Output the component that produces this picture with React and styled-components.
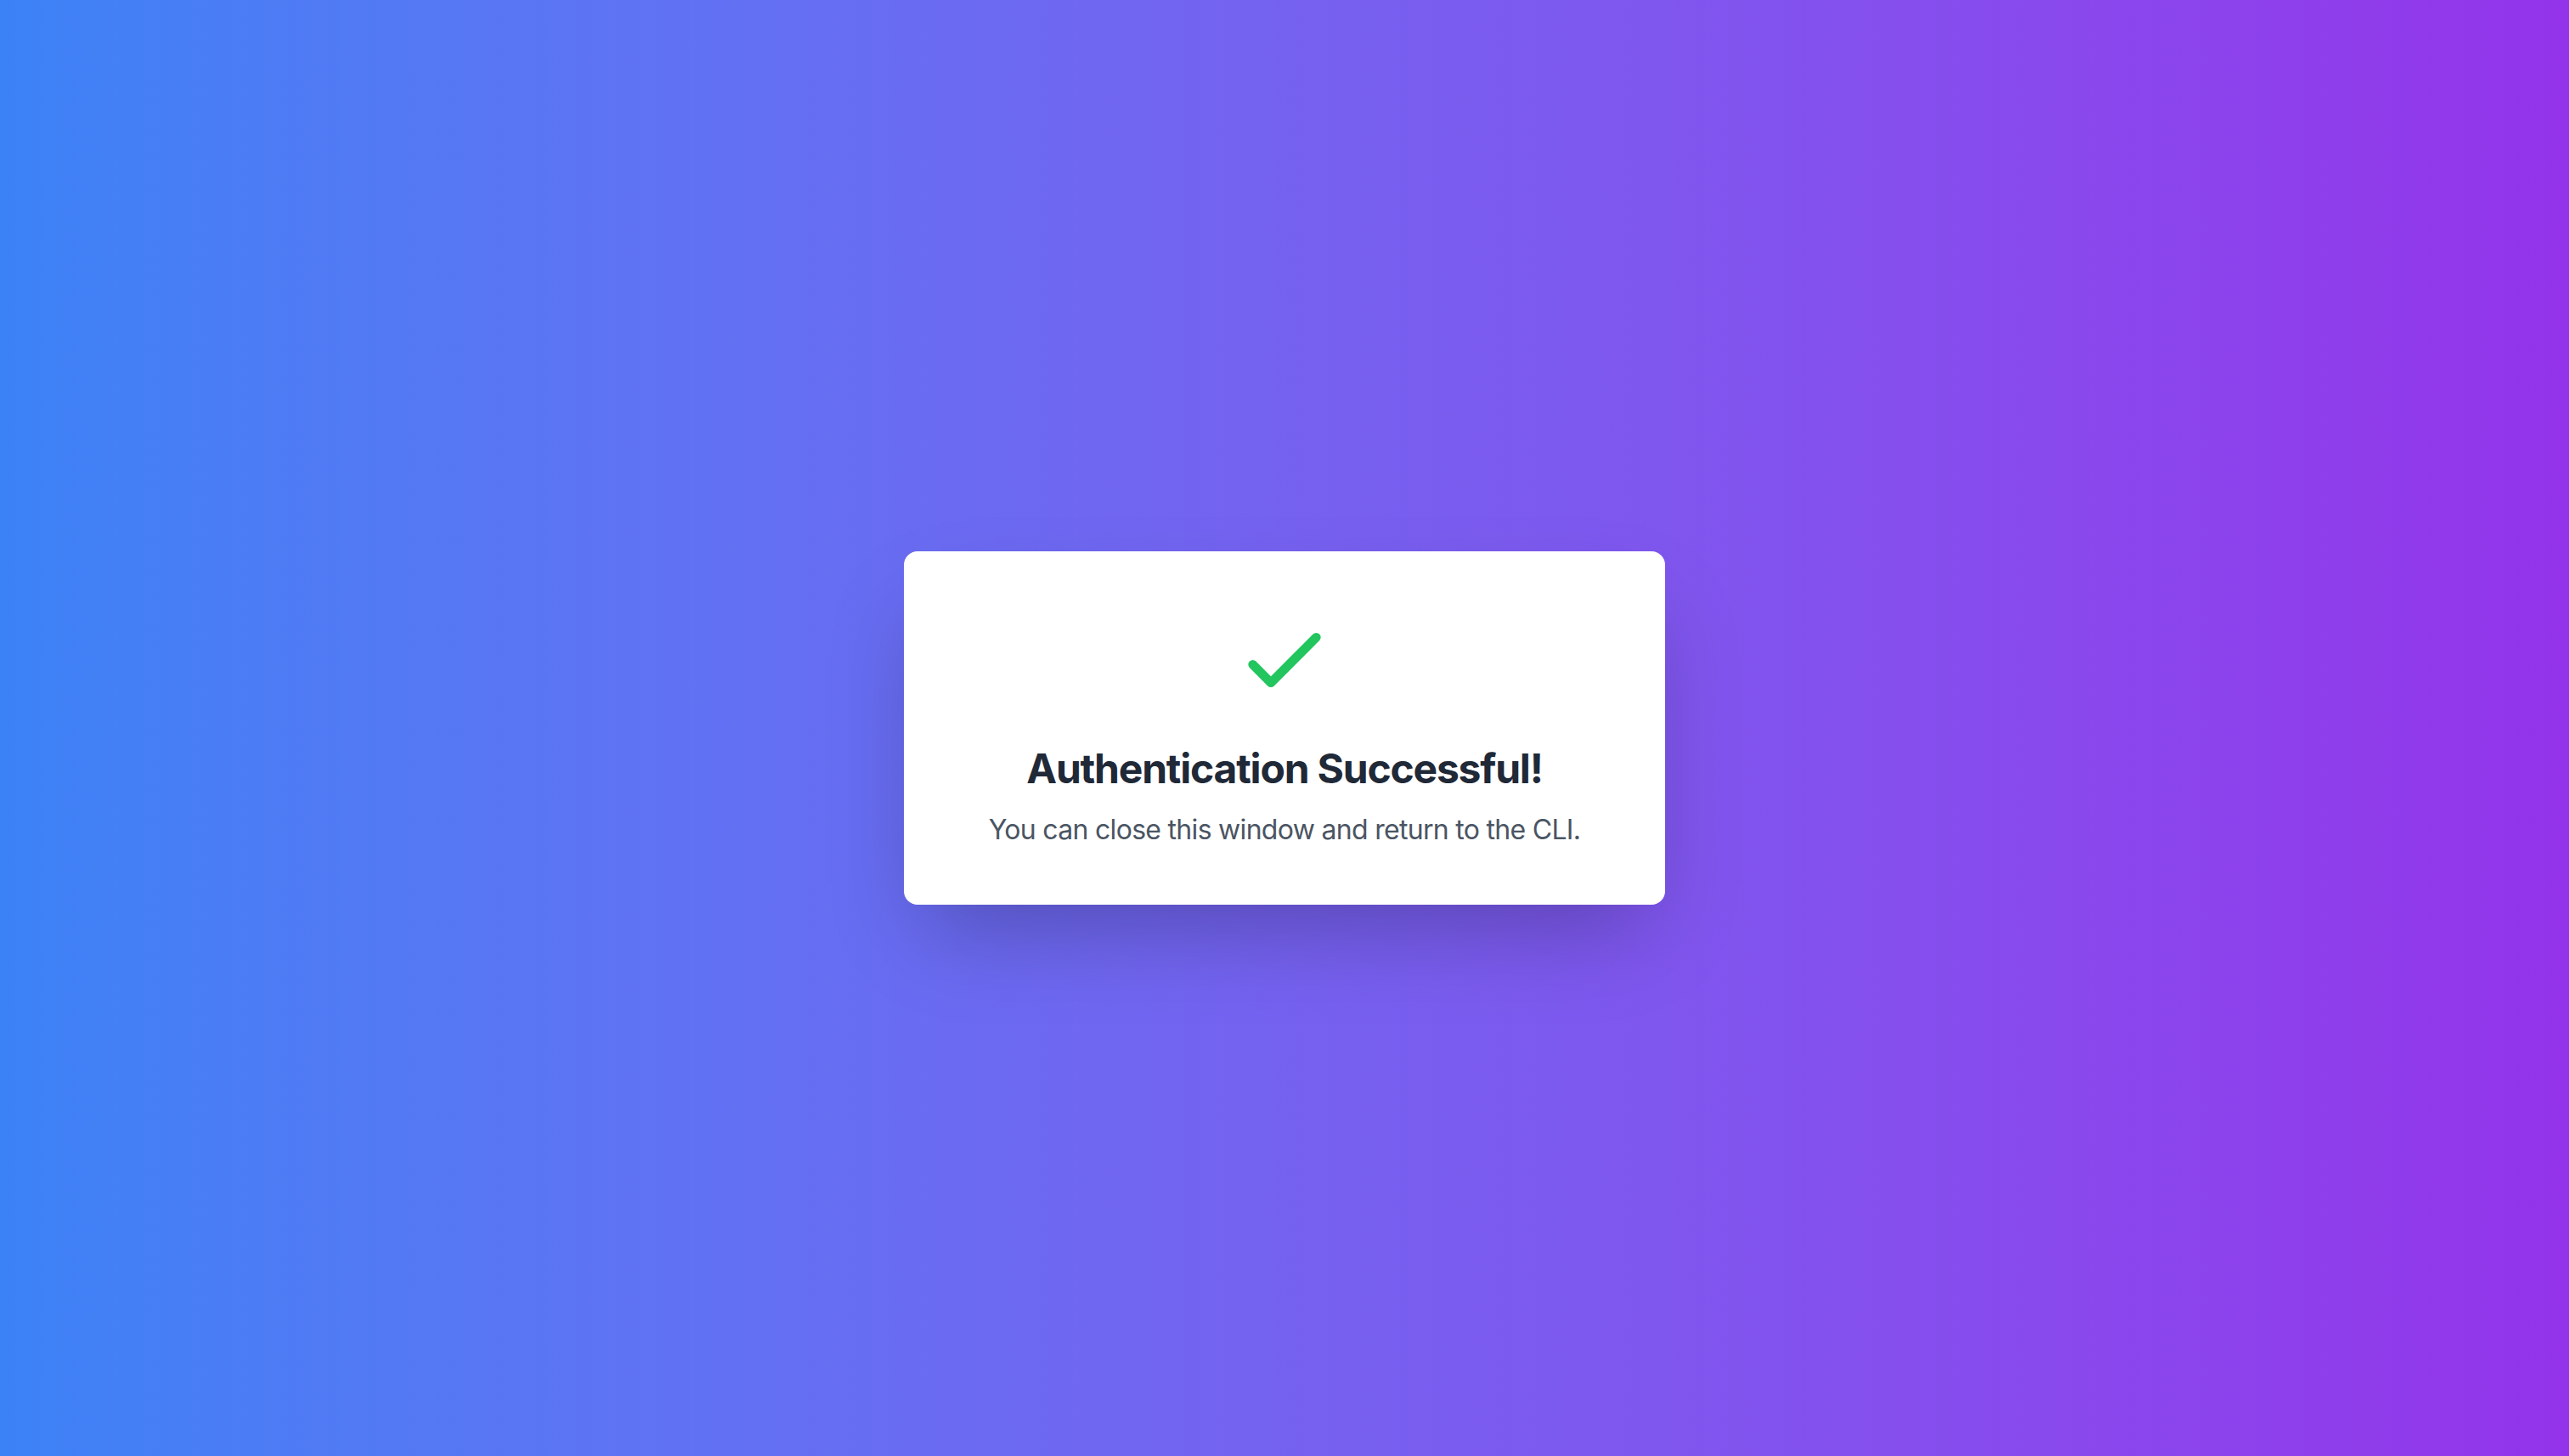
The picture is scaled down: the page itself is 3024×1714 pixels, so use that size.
import styled, { createGlobalStyle } from "styled-components";

const GlobalStyle = createGlobalStyle`
  html, body {
    margin: 0;
    padding: 0;
  }
  body {
    font-family: Inter, "Noto Sans", "Liberation Sans", sans-serif;
  }
`;

const Page = styled.div`
  width: 100%;
  min-height: 100vh;
  display: flex;
  align-items: center;
  justify-content: center;
  background: linear-gradient(to right in oklab, #3b82f6, #9333ea);
`;

const Card = styled.div`
  width: 896px;
  box-sizing: border-box;
  padding: 64px;
  background: #ffffff;
  border-radius: 16px;
  box-shadow: 0 50px 100px -24px rgba(0, 0, 0, 0.25);
  display: flex;
  flex-direction: column;
  align-items: center;
  text-align: center;
`;

const IconBox = styled.div`
  width: 128px;
  height: 128px;
  margin-bottom: 32px;
  color: #22c55e;
  svg {
    display: block;
    width: 100%;
    height: 100%;
  }
`;

const Title = styled.h1`
  margin: 0 0 16px;
  font-size: 48px;
  line-height: 64px;
  font-weight: 700;
  letter-spacing: -1.2px;
  color: #1f2937;
`;

const Message = styled.p`
  margin: 0;
  font-size: 32px;
  line-height: 48px;
  letter-spacing: -0.7px;
  color: #4b5563;
`;

const CheckIcon = () => (
  <svg viewBox="0 0 24 24" fill="none" stroke="currentColor">
    <path strokeLinecap="round" strokeLinejoin="round" strokeWidth="2" d="M5 13l4 4L19 7" />
  </svg>
);

const App = () => {
  return (
    <>
      <GlobalStyle />
      <Page>
        <Card>
          <IconBox>
            <CheckIcon />
          </IconBox>
          <Title>Authentication Successful!</Title>
          <Message>You can close this window and return to the CLI.</Message>
        </Card>
      </Page>
    </>
  );
};

export default App;
